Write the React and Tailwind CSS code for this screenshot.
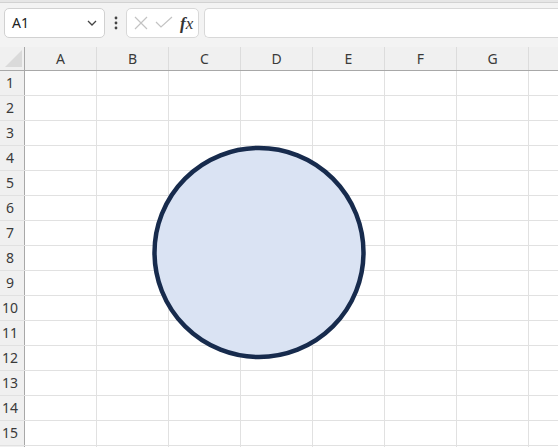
import React from "react";

const cols = ["A", "B", "C", "D", "E", "F", "G", ""];
const rows = Array.from({ length: 16 }, (_, i) => i + 1);

export default function App() {
  return (
    <div
      className="relative w-[558px] h-[447px] overflow-hidden bg-white"
      style={{ fontFamily: '"Noto Sans", "Noto Sans CJK JP", sans-serif' }}
    >
      {/* toolbar */}
      <div className="h-[47px] bg-[#f3f3f3] flex flex-col">
        <div className="h-[3px] bg-[#e6e6e6] border-b border-[#d2d2d2]" />
        <div className="mt-[5px] flex items-center h-[30px]">
          <div className="ml-[4px] w-[101px] h-[30px] bg-white border border-[#d1d1d1] rounded-[5px] flex items-center pl-[7px] pr-[6px]">
            <span className="text-[14px] text-[#222] flex-1 leading-none">A1</span>
            <svg width="10" height="6" viewBox="0 0 10 6" className="mr-[1px]">
              <path d="M1 1 L5 5 L9 1" fill="none" stroke="#444" strokeWidth="1.3" />
            </svg>
          </div>
          <div className="w-[21px] flex justify-center">
            <svg width="4" height="14" viewBox="0 0 4 14">
              <circle cx="2" cy="2" r="1.4" fill="#444" />
              <circle cx="2" cy="7" r="1.4" fill="#444" />
              <circle cx="2" cy="12" r="1.4" fill="#444" />
            </svg>
          </div>
          <div className="w-[73px] h-[30px] bg-white border border-[#d8d8d8] rounded-[5px] flex items-center pl-[5px]">
            <svg width="16" height="16" viewBox="0 0 16 16" className="ml-[1px]">
              <path d="M2 2 L14 14 M14 2 L2 14" stroke="#c3c3c3" strokeWidth="1.2" fill="none" />
            </svg>
            <svg width="18" height="14" viewBox="0 0 18 14" className="ml-[6px]">
              <path d="M1 6 L6 11 L17 1" stroke="#c3c3c3" strokeWidth="1.2" fill="none" />
            </svg>
            <span
              className="ml-[7px] text-[17px] italic text-[#333] leading-none"
              style={{ fontFamily: '"Liberation Serif", "DejaVu Serif", serif' }}
            >
              <span className="font-semibold">f</span>x
            </span>
          </div>
          <div className="ml-[5px] flex-1 h-[30px] bg-white border border-[#d8d8d8] rounded-l-[5px] border-r-0" />
        </div>
      </div>

      {/* column header */}
      <div className="flex h-[24px] bg-[#f0f0f0] border-b border-[#a8a8a8]">
        <div className="relative w-[25px] shrink-0 border-r border-[#a8a8a8]">
          <svg width="18" height="18" viewBox="0 0 18 18" className="absolute left-[5px] top-[3px]">
            <path d="M17 0 L17 17 L0 17 Z" fill="#dadada" />
          </svg>
        </div>
        {cols.map((c, i) => (
          <div
            key={i}
            className="w-[72px] shrink-0 border-r border-[#dcdcdc] flex items-center justify-center text-[14px] text-[#3a3a3a] leading-none"
          >
            {c}
          </div>
        ))}
      </div>

      {/* rows */}
      {rows.map((r) => (
        <div key={r} className="flex h-[25px] border-b border-[#e1e1e1]">
          <div className="w-[25px] shrink-0 bg-[#f0f0f0] border-r border-[#a8a8a8] flex items-center justify-center pr-[4px] text-[14px] text-[#3a3a3a] leading-none">
            {r <= 15 ? r : ""}
          </div>
          {cols.map((c, i) => (
            <div key={i} className="w-[72px] shrink-0 border-r border-[#e1e1e1]" />
          ))}
        </div>
      ))}

      {/* shape */}
      <svg
        width="216"
        height="216"
        viewBox="0 0 216 216"
        className="absolute left-[151px] top-[144px]"
      >
        <circle cx="108" cy="108.5" r="104.5" fill="#dae3f3" stroke="#172b4d" strokeWidth="4.5" />
      </svg>
    </div>
  );
}
